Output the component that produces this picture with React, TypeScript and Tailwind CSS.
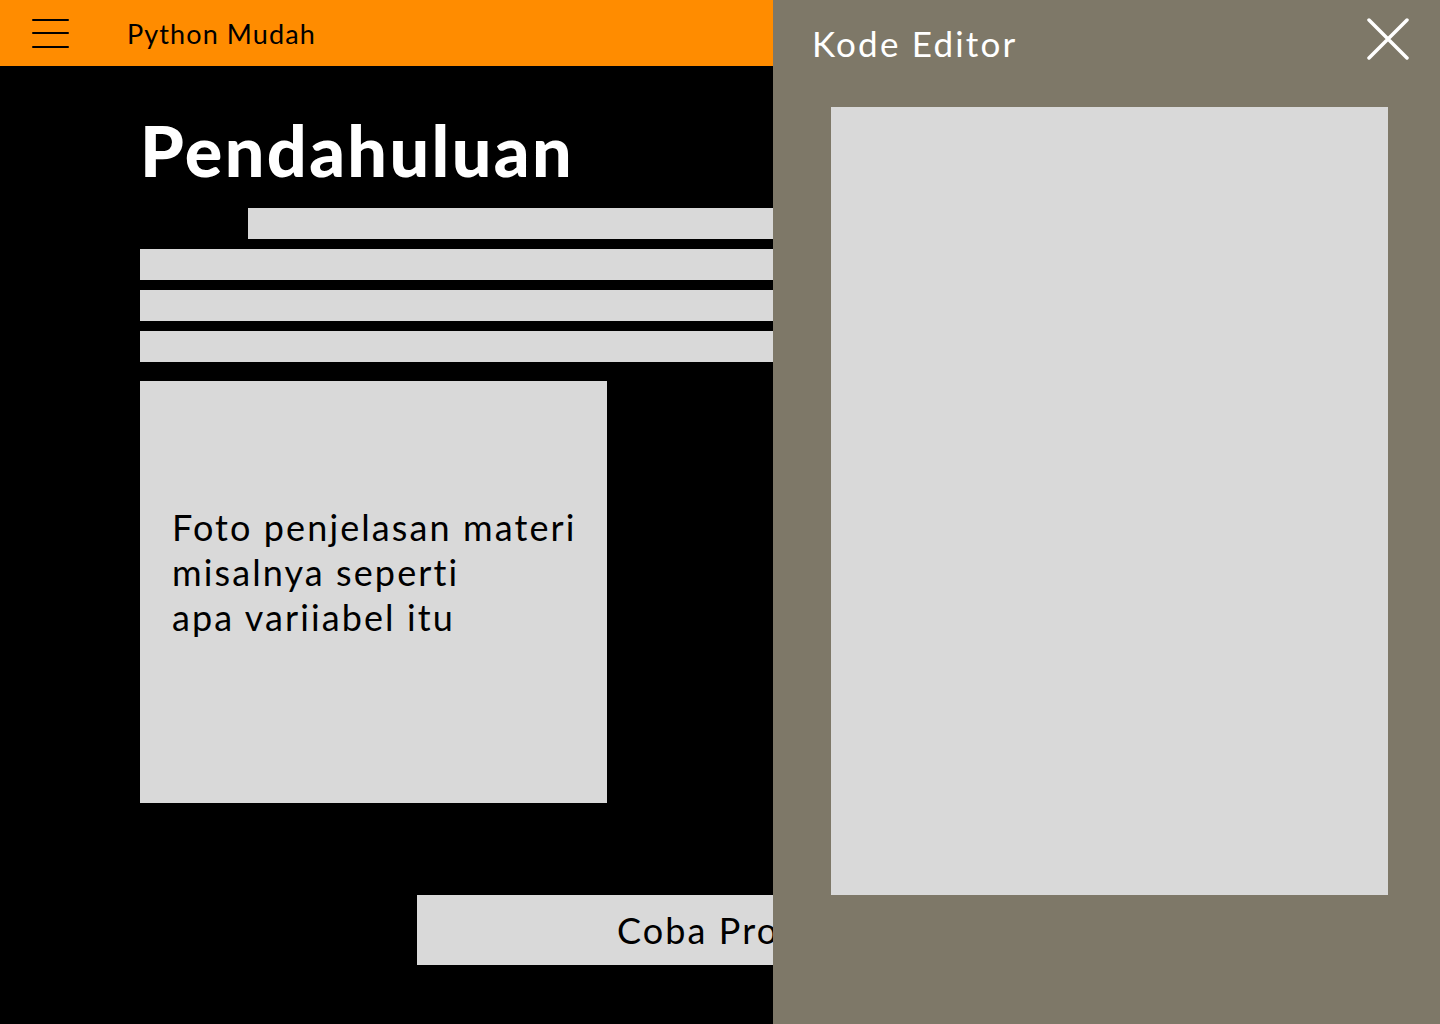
import React from 'react';

const font = { fontFamily: 'Lato, "Noto Sans", sans-serif' };

const Header: React.FC = () => (
  <header className="h-[66px] bg-[#FF8C00] flex items-center">
    <button className="ml-[32px] w-[37px] flex flex-col gap-[11.5px]">
      <span className="block h-[2px] bg-black rounded-full"></span>
      <span className="block h-[2px] bg-black rounded-full"></span>
      <span className="block h-[2px] bg-black rounded-full"></span>
    </button>
    <span className="ml-[58px] text-[27px] tracking-[1.1px] text-black leading-none">Python Mudah</span>
  </header>
);

const Drawer: React.FC = () => (
  <aside className="absolute top-0 right-0 w-[667px] h-full bg-[#7E7868] flex flex-col">
    <div className="flex items-start justify-between pl-[39px] pr-[31px] pt-[18px]">
      <h2 className="text-[35px] tracking-[2.2px] text-white leading-none mt-[8px]">Kode Editor</h2>
      <button className="w-[42px] h-[42px]">
        <svg viewBox="0 0 42 42" className="w-[42px] h-[42px]" fill="none" stroke="white" strokeWidth="3.5" strokeLinecap="round">
          <path d="M2 2L40 40M40 2L2 40" />
        </svg>
      </button>
    </div>
    <div className="ml-[58px] mt-[46px] w-[557px] h-[788px] bg-[#D9D9D9]"></div>
  </aside>
);

export default function App() {
  return (
    <div className="relative w-[1440px] h-[1024px] overflow-hidden bg-black" style={font}>
      <Header />
      <main className="pl-[140px] pr-[140px]">
        <h1 className="mt-[49px] text-[70px] tracking-[2.4px] font-black text-white leading-none">Pendahuluan</h1>
        <div className="mt-[23px] flex flex-col gap-[10px]">
          <div className="ml-[108px] h-[31px] bg-[#D9D9D9]"></div>
          <div className="h-[31px] bg-[#D9D9D9]"></div>
          <div className="h-[31px] bg-[#D9D9D9]"></div>
          <div className="h-[31px] bg-[#D9D9D9]"></div>
        </div>
        <div className="mt-[19px] w-[467px] h-[422px] bg-[#D9D9D9] pl-[32px] pt-[124px]">
          <p className="text-[36px] tracking-[2.1px] leading-[45px] text-black">
            Foto penjelasan materi
            <br />
            misalnya seperti
            <br />
            apa variiabel itu
          </p>
        </div>
        <button className="mt-[92px] ml-[277px] w-[630px] h-[70px] bg-[#D9D9D9] pl-[200px] text-left text-[36px] tracking-[2.1px] text-black leading-none">
          Coba Program
        </button>
      </main>
      <Drawer />
    </div>
  );
}
